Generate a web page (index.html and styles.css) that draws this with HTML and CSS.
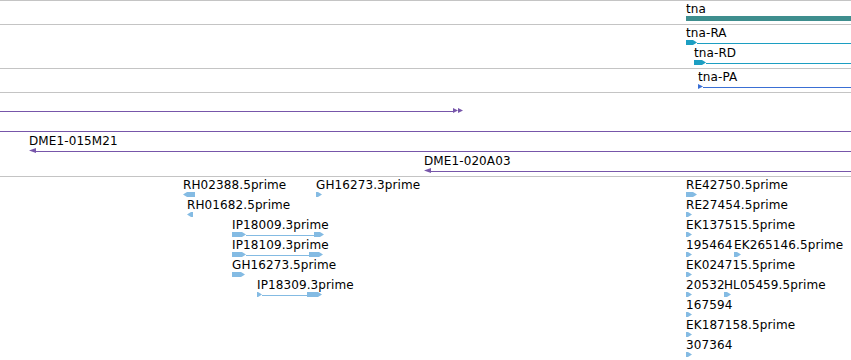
FILE: index.html
```html
<!DOCTYPE html>
<html lang="en">
<head>
  <meta charset="UTF-8">
  <meta name="viewport" content="width=device-width, initial-scale=1.0">
  <title>Track view - tna region</title>
  <link rel="stylesheet" href="styles.css">
</head>
<body>

<div class="tracks">

  <!-- Gene -->
  <div class="track">
    <div class="row">
      <div class="feat gene" style="left: 686px; width: 165px;">
        <span class="label">tna</span>
        <div class="glyph"><div class="bar"></div></div>
      </div>
    </div>
  </div>

  <!-- Transcripts -->
  <div class="track">
    <div class="row">
      <div class="feat mrna" style="left: 686px; width: 165px;">
        <span class="label">tna-RA</span>
        <div class="glyph"><div class="box pr" style="width: 11px;"></div><div class="line"></div></div>
      </div>
    </div>
    <div class="row">
      <div class="feat mrna" style="left: 694px; width: 157px;">
        <span class="label">tna-RD</span>
        <div class="glyph"><div class="box pr" style="width: 12px;"></div><div class="line"></div></div>
      </div>
    </div>
  </div>

  <!-- Proteins -->
  <div class="track">
    <div class="row">
      <div class="feat protein" style="left: 698px; width: 153px;">
        <span class="label">tna-PA</span>
        <div class="glyph"><div class="box tri-r" style="width: 5px;"></div><div class="line"></div></div>
      </div>
    </div>
  </div>

  <!-- BAC clones -->
  <div class="track">
    <div class="row">
      <div class="feat clone" style="left: 0; width: 463px;">
        <span class="label"></span>
        <div class="glyph"><div class="line"></div><div class="box tri-r" style="width: 5px;"></div><div class="box tri-r" style="width: 5px;"></div></div>
      </div>
    </div>
    <div class="row">
      <div class="feat clone" style="left: 0; width: 851px;">
        <span class="label"></span>
        <div class="glyph"><div class="line"></div></div>
      </div>
    </div>
    <div class="row">
      <div class="feat clone" style="left: 29px; width: 822px;">
        <span class="label">DME1-015M21</span>
        <div class="glyph"><div class="box tri-l" style="width: 7px;"></div><div class="line"></div></div>
      </div>
    </div>
    <div class="row">
      <div class="feat clone" style="left: 424px; width: 427px;">
        <span class="label">DME1-020A03</span>
        <div class="glyph"><div class="box tri-l" style="width: 7px;"></div><div class="line"></div></div>
      </div>
    </div>
  </div>

  <!-- ESTs -->
  <div class="track est-track">
    <div class="row">
      <div class="feat est" style="left: 183px;">
        <span class="label">RH02388.5prime</span>
        <div class="glyph"><div class="box pl" style="width: 12px;"></div></div>
      </div>
      <div class="feat est" style="left: 316px;">
        <span class="label">GH16273.3prime</span>
        <div class="glyph"><div class="box pr" style="width: 6px;"></div></div>
      </div>
      <div class="feat est" style="left: 686px;">
        <span class="label">RE42750.5prime</span>
        <div class="glyph"><div class="box pr" style="width: 11px;"></div></div>
      </div>
    </div>
    <div class="row">
      <div class="feat est" style="left: 187px;">
        <span class="label">RH01682.5prime</span>
        <div class="glyph"><div class="box pl" style="width: 6px;"></div></div>
      </div>
      <div class="feat est" style="left: 686px;">
        <span class="label">RE27454.5prime</span>
        <div class="glyph"><div class="box pr" style="width: 6px;"></div></div>
      </div>
    </div>
    <div class="row">
      <div class="feat est" style="left: 232px;">
        <span class="label">IP18009.3prime</span>
        <div class="glyph"><div class="box pr" style="width: 14px;"></div><div class="line" style="width: 68px;"></div><div class="box pr" style="width: 10px;"></div></div>
      </div>
      <div class="feat est" style="left: 686px;">
        <span class="label">EK137515.5prime</span>
        <div class="glyph"><div class="box pr" style="width: 6px;"></div></div>
      </div>
    </div>
    <div class="row">
      <div class="feat est" style="left: 232px;">
        <span class="label">IP18109.3prime</span>
        <div class="glyph"><div class="box pr" style="width: 14px;"></div><div class="line" style="width: 63px;"></div><div class="box pr" style="width: 14px;"></div></div>
      </div>
      <div class="feat est" style="left: 686px;">
        <span class="label">195464</span>
        <div class="glyph"><div class="box pr" style="width: 6px;"></div></div>
      </div>
      <div class="feat est" style="left: 734px;">
        <span class="label">EK265146.5prime</span>
        <div class="glyph"><div class="box pr" style="width: 7px;"></div></div>
      </div>
    </div>
    <div class="row">
      <div class="feat est" style="left: 232px;">
        <span class="label">GH16273.5prime</span>
        <div class="glyph"><div class="box pr" style="width: 13px;"></div></div>
      </div>
      <div class="feat est" style="left: 686px;">
        <span class="label">EK024715.5prime</span>
        <div class="glyph"><div class="box pr" style="width: 6px;"></div></div>
      </div>
    </div>
    <div class="row">
      <div class="feat est" style="left: 257px;">
        <span class="label">IP18309.3prime</span>
        <div class="glyph"><div class="box pr" style="width: 5px;"></div><div class="line" style="width: 45px;"></div><div class="box pr" style="width: 15px;"></div></div>
      </div>
      <div class="feat est" style="left: 686px;">
        <span class="label">20532</span>
        <div class="glyph"><div class="box pr" style="width: 6px;"></div></div>
      </div>
      <div class="feat est" style="left: 724px;">
        <span class="label">HL05459.5prime</span>
        <div class="glyph"><div class="box pr" style="width: 7px;"></div></div>
      </div>
    </div>
    <div class="row">
      <div class="feat est" style="left: 686px;">
        <span class="label">167594</span>
        <div class="glyph"><div class="box pr" style="width: 6px;"></div></div>
      </div>
    </div>
    <div class="row">
      <div class="feat est" style="left: 686px;">
        <span class="label">EK187158.5prime</span>
        <div class="glyph"><div class="box pr" style="width: 6px;"></div></div>
      </div>
    </div>
    <div class="row">
      <div class="feat est" style="left: 686px;">
        <span class="label">307364</span>
        <div class="glyph"><div class="box pr" style="width: 6px;"></div></div>
      </div>
    </div>
  </div>

</div>

</body>
</html>
```

FILE: styles.css
```css
/* Track view */
* { box-sizing: border-box; margin: 0; padding: 0; }
body { font-family: "DejaVu Sans", Verdana, sans-serif; font-size: 12px; color: #000; background-color: #fff; overflow: hidden; width: 851px; height: 360px; }

.tracks { border-top: 1px solid #c4c4c4; }
.track { border-bottom: 1px solid #c4c4c4; padding-bottom: 3px; }
.est-track { border-bottom: none; }

.row { position: relative; height: 20px; }
.feat { position: absolute; top: 1px; display: flex; flex-direction: column; }
.label { display: block; height: 14px; line-height: 14px; white-space: nowrap; letter-spacing: 0.1px; }
.est .label { overflow: visible; }

.glyph { display: flex; height: 5px; }
.bar { flex: 1; height: 5px; }
.box { flex: none; height: 5px; }
.line { flex: 1; height: 1px; margin-top: 3px; }

/* shapes */
.pr { clip-path: polygon(0 0, calc(100% - 4px) 0, 100% 50%, calc(100% - 4px) 100%, 0 100%); }
.pl { clip-path: polygon(4px 0, 100% 0, 100% 100%, 4px 100%, 0 50%); }
.tri-r { clip-path: polygon(0 0, 100% 50%, 0 100%); }
.tri-l { clip-path: polygon(100% 0, 0 50%, 100% 100%); }

/* colours per track */
.gene .bar { background-color: #3e8e8e; }
.mrna .box, .mrna .line { background-color: #1c9ec2; }
.protein .box, .protein .line { background-color: #3a6fd4; }
.clone .box, .clone .line { background-color: #7756aa; }
.est .box, .est .line { background-color: #84bbe3; }
.est .line { flex: none; }
```
